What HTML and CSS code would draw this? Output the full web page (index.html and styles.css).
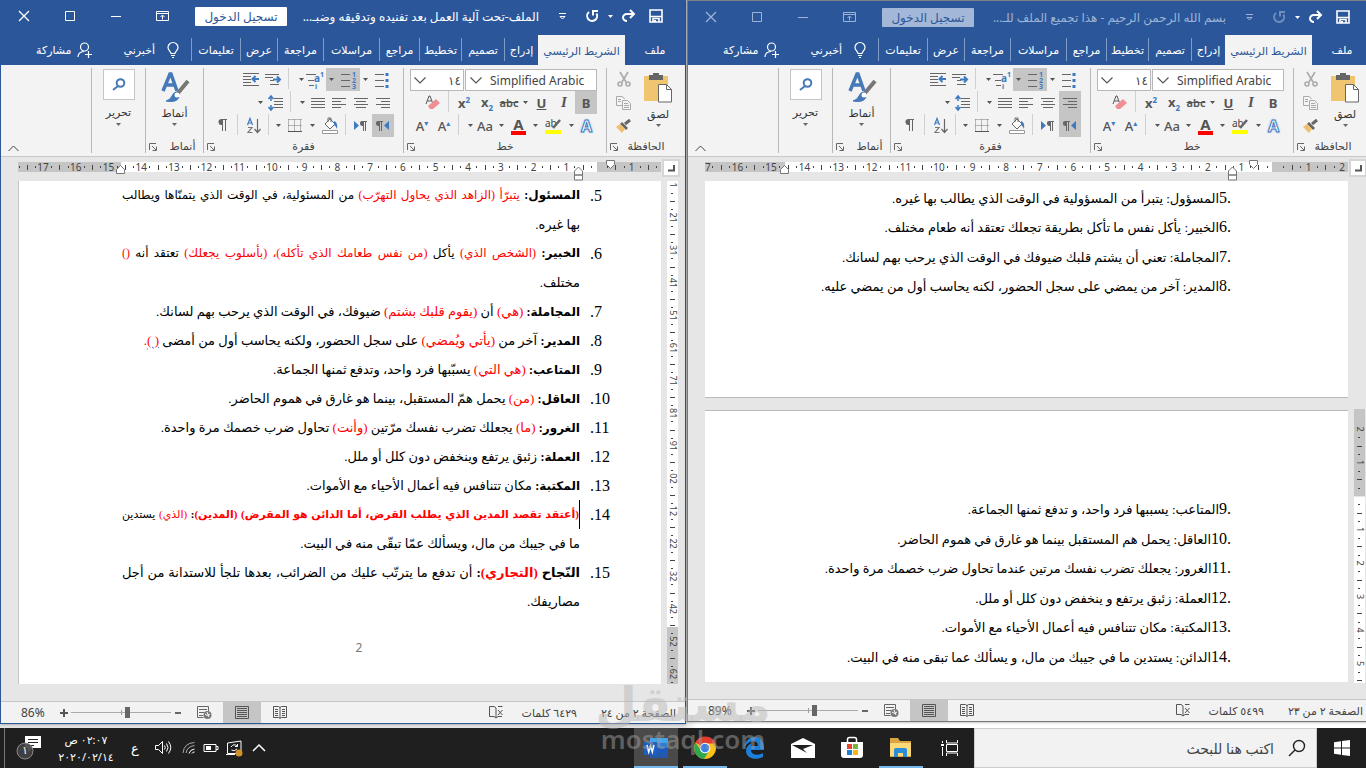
FILE: index.html
```html
<!DOCTYPE html>
<html lang="ar">
<head>
<meta charset="utf-8">
<title>الملف</title>
<link rel="stylesheet" href="styles.css">
</head>
<body>
<main class="desktop">
  <section class="window window-main" data-title="الملف-تحت آلية العمل بعد تفنيده وتدقيقه وضبـ..." data-zoom="86%" data-page="الصفحة ٢ من ٢٤" data-words="٦٤٢٩ كلمات" data-pressed="bold">
    <div class="workspace">
      <div class="hruler" data-width="643" data-zero="581" data-pitch="32.7" data-from="103" data-to="579" data-first="551" data-indent="592" data-end="102"></div>
      <button class="corner" aria-label="علامة جدولة"><svg width="8" height="8"><path d="M1 6.500h6V1" fill="none" stroke="#555" stroke-width="2"/></svg></button>
      <div class="pages">
        <article class="page page-tall" dir="rtl">
          <ol class="items">
            <li><span class="num">5.</span><div><p class="full"><b>المسئول:</b> <i>يتبرّأ (الزاهد الذي يحاول التهرّب)</i> من المسئولية، في الوقت الذي يتمنّاها ويطالب</p><p>بها غيره.</p></div></li>
            <li><span class="num">6.</span><div><p class="full"><b>الخبير:</b> <i>(الشخص الذي)</i> يأكل <i>(من نفس طعامك الذي تأكله)، (بأسلوب يجعلك)</i> تعتقد أنه <i>()</i></p><p>مختلف.</p></div></li>
            <li><span class="num">7.</span><div><p><b>المجاملة:</b> <i>(هي)</i> أن <i>(يقوم قلبك بشتم)</i> ضيوفك، في الوقت الذي يرحب بهم لسانك.</p></div></li>
            <li><span class="num">8.</span><div><p><b>المدير:</b> آخر من <i>(يأتي ويُمضي)</i> على سجل الحضور، ولكنه يحاسب أول من أمضى <i><u>( )</u>.</i></p></div></li>
            <li><span class="num">9.</span><div><p><b>المتاعب:</b> <i>(هي التي)</i> يسبّبها فرد واحد، وتدفع ثمنها الجماعة.</p></div></li>
            <li><span class="num">10.</span><div><p><b>العاقل:</b> <i>(من)</i> يحمل همّ المستقبل، بينما هو غارق في هموم الحاضر.</p></div></li>
            <li><span class="num">11.</span><div><p><b>الغرور:</b> <i>(ما)</i> يجعلك تضرب نفسك مرّتين <i>(وأنت)</i> تحاول ضرب خصمك مرة واحدة.</p></div></li>
            <li><span class="num">12.</span><div><p><b>العملة:</b> زئبق يرتفع وينخفض دون كلل أو ملل.</p></div></li>
            <li><span class="num">13.</span><div><p><b>المكتبة:</b> مكان تتنافس فيه أعمال الأحياء مع الأموات.</p></div></li>
            <li><span class="num">14.</span><div><p class="full tight"><b><i>(أعتقد تقصد المدين الذي يطلب القرض، أما الدائن هو المقرض) (المدين)</i>:</b> <i>(الذي)</i> يستدين</p><p>ما في جيبك من مال، ويسألك عمّا تبقّى منه في البيت.</p></div></li>
            <li><span class="num">15.</span><div><p class="full roomy"><b>النّجاح <i>(التجاري)</i>:</b> أن تدفع ما يترتّب عليك من الضرائب، بعدها تلجأ للاستدانة من أجل</p><p>مصاريفك.</p></div></li>
          </ol>
          <footer class="folio">2</footer>
        </article>
      </div>
      <div class="vruler" data-kind="main"></div>
    </div>
  </section>

  <section class="window window-side" data-title="بسم الله الرحمن الرحيم - هذا تجميع الملف للـ..." data-zoom="89%" data-page="الصفحة ٢ من ٢٣" data-words="٥٤٩٩ كلمات" data-pressed="right">
    <div class="workspace">
      <div class="hruler" data-width="643" data-zero="570" data-pitch="33.6" data-from="80" data-to="567" data-first="518" data-indent="548" data-end="79"></div>
      <button class="corner" aria-label="علامة جدولة"><svg width="8" height="8"><path d="M1 6.500h6V1" fill="none" stroke="#555" stroke-width="2"/></svg></button>
      <div class="pages">
        <article class="page page-top" dir="rtl">
          <p><span>.5</span>المسؤول: يتبرأ من المسؤولية في الوقت الذي يطالب بها غيره.</p>
          <p><span>.6</span>الخبير: يأكل نفس ما تأكل بطريقة تجعلك تعتقد أنه طعام مختلف.</p>
          <p><span>.7</span>المجاملة: تعني أن يشتم قلبك ضيوفك في الوقت الذي يرحب بهم لسانك.</p>
          <p><span>.8</span>المدير: آخر من يمضي على سجل الحضور، لكنه يحاسب أول من يمضي عليه.</p>
        </article>
        <article class="page page-bottom" dir="rtl">
          <p><span>.9</span>المتاعب: يسببها فرد واحد، و تدفع ثمنها الجماعة.</p>
          <p><span>.10</span>العاقل: يحمل هم المستقبل بينما هو غارق في هموم الحاضر.</p>
          <p><span>.11</span>الغرور: يجعلك تضرب نفسك مرتين عندما تحاول ضرب خصمك مرة واحدة.</p>
          <p><span>.12</span>العملة: زئبق يرتفع و ينخفض دون كلل أو ملل.</p>
          <p><span>.13</span>المكتبة: مكان تتنافس فيه أعمال الأحياء مع الأموات.</p>
          <p><span>.14</span>الدائن: يستدين ما في جيبك من مال، و يسألك عما تبقى منه في البيت.</p>
        </article>
      </div>
      <div class="vruler" data-kind="side"></div>
    </div>
  </section>
</main>

<footer class="taskbar">
  <div class="tray">
    <button class="notify" aria-label="الإشعارات"><svg width="28" height="30"><path d="M9 3h16v12h-9l-4 4v-4H9z" fill="#fff"/><path d="M12 6.500h10M12 9.500h10M12 12.500h6" stroke="#222"/><circle cx="9" cy="18" r="8" fill="#444" fill-opacity=".9" stroke="#8a8a8a"/></svg><span>١</span></button>
    <time class="clock" dir="rtl">٠٢:٠٧ ص<br>٢٠٢٠/٠٢/١٤</time>
    <button class="lang">ع</button>
    <button class="t1" aria-label="الصوت"><svg width="18" height="16" fill="none" stroke="#fff"><path d="M1.500 5.500h3l4-4v12l-4-4h-3zM10.500 5.500q1.500 2 0 4M12.500 3.500q3 4 0 8M14.500 1.500q4.500 6 0 12"/></svg></button>
    <button class="t2" aria-label="الشبكة"><svg width="14" height="14" fill="none" stroke="#aaa"><path d="M1 12Q2 2 12.500 1.500M4 12Q5 5.500 12.500 4.500" /><path stroke="#fff" d="M7 12.500q1-4 5.500-4.500M10 12.500q.5-1.500 2.500-1.500"/></svg></button>
    <button class="t3" aria-label="البطارية"><svg width="16" height="10"><path d="M1 1.500h12v7H1zM13 3.500h2v3h-2" fill="none" stroke="#fff"/><path d="M3 3h5v4H3z" fill="#fff"/></svg></button>
    <button class="t4" aria-label="التحديث"><svg width="18" height="17"><path d="M1.500 3L15 1v12.500H1.500zM0 14.500h9" fill="none" stroke="#fff"/><path d="M5 7q3-4 6-1m.5-2v2.500H9M11 9q-3 3-5.500 1" fill="none" stroke="#fff"/><circle cx="13" cy="13" r="3.500" fill="#d0942a"/></svg></button>
    <button class="t5" aria-label="إظهار المزيد"><svg width="14" height="8"><path d="M1 7l6-6 6 6" fill="none" stroke="#fff" stroke-width="1.500"/></svg></button>
  </div>
  <nav class="apps">
    <button class="open current" aria-label="Word"><svg width="26" height="24"><path d="M7 2h18v6H7z" fill="#41a5ee"/><path d="M7 7h18v5H7z" fill="#2b7cd3"/><path d="M7 12h18v5H7z" fill="#185abd"/><path d="M7 17h18v5H7z" fill="#2458a8"/><path d="M1 6h13v13H1z" fill="#1f5fbf"/><path d="M4 9l1.700 7L7.500 10l1.800 6L11 9" fill="none" stroke="#fff" stroke-width="1.500"/></svg></button>
    <button class="open" aria-label="Chrome"><svg width="24" height="24" viewBox="0 0 24 24"><circle cx="12" cy="12" r="11" fill="#fbc116"/><path d="M12 12L2.500 6.500A11 11 0 0 1 22.500 7.500H12z" fill="#e33b2e"/><path d="M12 12L7.500 14 2.500 6.500A11 11 0 0 0 11 23l5-8z" fill="#2da94f"/><circle cx="12" cy="12" r="5.300" fill="#fff"/><circle cx="12" cy="12" r="4.200" fill="#3b82e8"/></svg></button>
    <button aria-label="Edge"><svg width="22" height="24"><path d="M1 12C2 4 7 1 12 1c6 0 9 5 9 10v3H8c0 5 7 6 12 3v4C12 25 3 22 3 15c0-4 3-7 6-8-1 1-1 2-1 3h7c0-7-10-6-14 2z" fill="#1b7fdb"/></svg></button>
    <button aria-label="البريد"><svg width="24" height="22"><path d="M0 7l12-6 12 6v14H0z" fill="#fff"/><path d="M1 8h21l-10 4 4 4z" fill="#1f1f1f"/></svg></button>
    <button aria-label="المتجر"><svg width="24" height="24"><path d="M1 6h22v13q0 3-3 3H4q-3 0-3-3z" fill="#fff"/><path d="M7.500 6V3.500q0-2 2-2h5q2 0 2 2V6" fill="none" stroke="#fff" stroke-width="1.500"/><path d="M7 8h5v5H7z" fill="#e8452c"/><path d="M13 8h5v5h-5z" fill="#7bb53a"/><path d="M7 14h5v5H7z" fill="#1b82d0"/><path d="M13 14h5v5h-5z" fill="#f5b813"/></svg></button>
    <button class="open" aria-label="مستكشف الملفات"><svg width="24" height="22"><path d="M1 1h8l2 3h11v16H1z" fill="#d9a441"/><path d="M1 6h21v13H1z" fill="#fbd978"/><path d="M5 20v-7q0-2 2-2h9q2 0 2 2v7h-4v-4H9v4z" fill="#2a8dd8"/></svg></button>
    <button aria-label="عرض المهام"><svg width="18" height="18" fill="none" stroke="#fff"><path d="M5.500 1v3h11V1M5.500 5.500h11v7h-11zM5.500 17v-3h11v3M1.500 2v2M1.500 8v9"/><path d="M0 6h3" stroke-width="2"/></svg></button>
  </nav>
  <label class="search" dir="rtl"><svg width="18" height="18"><circle cx="11" cy="7" r="5.500" fill="none" stroke="#222" stroke-width="1.400"/><path d="M7 11l-6 6" stroke="#222" stroke-width="1.400"/></svg><input type="text" placeholder="اكتب هنا للبحث" aria-label="بحث"></label>
  <button class="start" aria-label="ابدأ"><svg width="16" height="16" fill="#fff"><path d="M0 2.200l7-1v6.300H0zM8 1l8-1v7.500H8zM0 8.500h7v6.300l-7-1zM8 8.500h8V16l-8-1z"/></svg></button>
</footer>
<div class="watermark" dir="rtl"><strong>مستقل</strong><span>mostaql.com</span></div>
<script src="app.js"></script>
</body>
</html>
```
FILE: styles.css
```css
* { box-sizing: border-box; }
body { margin: 0; height: 100vh; display: flex; flex-direction: column; overflow: hidden; background: #fff; font-family: "Noto Sans", "DejaVu Sans", sans-serif; font-size: 11px; color: #333; position: relative; }
button { background: none; border: 0; padding: 0; margin: 0; font: inherit; color: inherit; display: flex; flex: none; align-items: center; justify-content: center; white-space: nowrap; }
svg { display: block; flex: none; overflow: visible; }
p { margin: 0; }

.desktop { flex: 1; min-height: 0; display: flex; gap: 1px; overflow: hidden; background: linear-gradient(90deg, #e4e4e4 50%, #fff 51%); }
.window { flex: 0 0 calc(50% + 3px); min-width: 0; display: flex; flex-direction: column; background: #e6e6e6; border: 1px solid #2b579a; border-top: 0; margin-bottom: 4px; box-shadow: 0 0 3px #0006; }
.window-side { border-color: #777; margin-bottom: 6px; }

.titlebar { height: 35px; background: #2b579a; color: #fff; display: flex; align-items: flex-start; }
.window-side .titlebar { border-top: 1px solid #7a7f88; }
.titlebar button { height: 32px; }
.wincontrols { display: flex; }
.wincontrols button { width: 46px; }
.titlebar .signin { width: 92px; height: 19px; margin: 7px 0 0 10px; background: #fff; color: #2b579a; border-radius: 1px; font-size: 12px; }
.titlebar h1 { flex: 1; min-width: 0; margin: 0; font-size: 12px; font-weight: 400; line-height: 34px; overflow: hidden; white-space: nowrap; text-align: right; }
.quick { display: flex; padding-right: 22px; }
.quick .menu { width: 46px; }
.quick .undo { width: 14px; }
.quick .small { width: 22px; }
.quick .redo { width: 15px; }
.quick .save { width: 14px; margin-left: 13px; }
.window-side .wincontrols, .window-side h1, .window-side .menu, .window-side .undo { color: #9db4d6; }
.window-side .undo { opacity: .6; }
.window-side .titlebar .signin { background: #a3b8d8; }

.tabs { height: 30px; background: #2b579a; color: #fff; display: flex; direction: rtl; }
.tabs button { height: 23px; margin-top: 3px; border-left: 1px solid #7f9cc8; }
.tabs button.file { border: 0; }
.tabs button.active { height: 30px; margin: 0; border: 0; background: #f3f3f3; color: #2b579a; }
.tabs button.plain { border: 0; gap: 12px; }
.tabs button.share { gap: 5px; margin-right: 32px; }
.tabs button.tell { margin-right: 12px; }

.ribbon { height: 92px; background: #f3f3f3; border-bottom: 1px solid #c8c8c8; display: flex; flex-direction: row-reverse; padding-top: 3px; }
.group { flex: none; border-left: 1px solid #b8b8b8; height: 85px; display: flex; flex-direction: column; justify-content: space-between; }
.g-clip { width: 79px; }
.g-font { width: 203px; }
.g-para { width: 200px; }
.g-style { width: 58px; }
.g-edit { width: 54px; }
.row { display: flex; height: 23px; }
.row button { height: 23px; color: #555; }
.row .pressed { background: #c5c5c5; }
.row .duo { display: flex; }
.sep { width: 1px; background: #cfcfcf; height: 21px; }
.group-name { display: flex; height: 16px; align-items: center; justify-content: center; position: relative; color: #444; }
.group-name button { position: absolute; left: 3px; top: 6px; }
.g-style .group-name { padding-left: 16px; }
.clip-body { display: flex; }
.clip-tools { width: 34px; }
.clip-tools button { width: 34px; height: 23px; }
.big { flex-direction: column; gap: 3px; justify-content: flex-start; height: 69px; padding-top: 5px; }
.big > svg:last-child { color: #666; }
.clip-body .big { width: 34px; }
.g-edit .big { padding-top: 1px; gap: 4px; }
.lens { width: 32px; height: 31px; background: #fff; border: 1px solid #c6c6c6; display: flex; align-items: center; justify-content: center; }
.collapse { flex: 1; align-items: flex-end; justify-content: flex-start; padding: 0 0 4px 7px; }
.combo { display: flex; align-items: center; background: #fff; border: 1px solid #b8b8b8; height: 22px; margin-top: 1px; padding-left: 3px; }
.combo select { flex: 1; min-width: 0; appearance: none; border: 0; background: none; padding: 0; margin: 0; font: inherit; font-size: 12px; color: #444; }
.combo.size { width: 54px; margin-right: 1px; padding-right: 2px; }
.combo.size select { direction: rtl; }
.combo.face { width: 132px; padding-left: 4px; }
.combo.face select { padding-left: 8px; }
.glyph { font-size: 13px; font-weight: 700; }
.strike { font-size: 11px; text-decoration: line-through; font-weight: 600; }
.under { text-decoration: underline; }
.ital { font-family: "Liberation Serif", serif; font-style: italic; font-size: 15px; }
.medium { font-weight: 500; }
.glyph sup, .glyph sub { font-size: 8px; color: #3e7ac0; line-height: 1; }
.bar { border-bottom: 4px solid #f00; line-height: 14px; padding: 0 2px; font-size: 15px; }
.glow { color: #fff; font-size: 16px; -webkit-text-stroke: 1px #3e7ac0; text-shadow: 0 0 3px #7fb1e6; }

.workspace { flex: 1; min-height: 0; display: grid; grid-template-columns: minmax(0, 1fr) 24px; grid-template-rows: 24px minmax(0, 1fr); }
.hruler { justify-self: end; }
.corner { width: 18px; height: 18px; margin: 2px 0 0 1px; border: 2px solid #d6d6d6; background: #fff; justify-self: start; }
.pages { min-height: 0; overflow: hidden; padding-left: 17px; }
.vruler { overflow: hidden; padding-left: 6px; }
.page { background: #fff; font-family: "Liberation Serif", "DejaVu Sans", serif; font-size: 13px; color: #000; }
.page-tall { height: 503px; border-left: 1px solid #c6c6c6; padding: 0 49px 0 103px; display: flex; flex-direction: column; }
.items { list-style: none; margin: 0; padding: 0; line-height: 29px; white-space: nowrap; }
.items li { display: flex; }
.items li > div { flex: 1; min-width: 0; }
.items p { height: 29px; }
.items b { font-size: 12px; line-height: 1; }
.num { width: 32px; padding-left: 10px; direction: rtl; display: flex; justify-content: flex-end; font-size: 16px; }
.items i { font-style: normal; color: #f00; }
.items u { text-decoration: underline wavy #2b6fd0 1px; }
.items .full { text-align-last: justify; font-size: 12px; }
.items .tight, .items .tight b { font-size: 11px; }
.items .roomy, .items .roomy b { font-size: 13px; }
.tight { border-right: 1px solid #000; }
.folio { text-align: center; direction: ltr; padding: 23px 0 0; margin-right: -32px; margin-left: -48px; color: #777; font-family: "Noto Sans", sans-serif; font-size: 12px; }
.page-top, .page-bottom { display: flex; flex-direction: column; justify-content: space-between; line-height: 30px; white-space: nowrap; padding-right: 117px; }
.page-top span, .page-bottom span { font-size: 16px; line-height: 1; }
.page-top { height: 217px; padding-top: 3px; padding-bottom: 96px; border-bottom: 1px solid #bbb; }
.page-bottom { height: 272px; margin-top: 12px; padding-top: 84px; padding-bottom: 10px; border-top: 1px solid #bbb; }
.page-top p, .page-bottom p { height: 29px; }

.status { height: 22px; border-top: 1px solid #c6c6c6; background: #f2f2f2; display: flex; align-items: center; color: #444; direction: ltr; }
.status .pct { width: 56px; padding-left: 20px; font-size: 12px; }
.status .step { width: 14px; }
.status input { width: 100px; height: 12px; margin: 0; appearance: none; background: linear-gradient(#aaa, #aaa) 0 50% / 100% 1px no-repeat, linear-gradient(#999, #999) 50% 50% / 1px 5px no-repeat; }
.status input::-webkit-slider-thumb { appearance: none; width: 5px; height: 11px; background: #666; }
.status .view { width: 38px; height: 21px; }
.status .view.on { background: #c5c5c5; }
.status .views { display: flex; }
.status .grow { flex: 1; }
.status .proof { width: 36px; }
.status .words { width: 73px; padding-right: 10px; white-space: nowrap; }
.status .where { width: 98px; padding-right: 9px; white-space: nowrap; }

.taskbar { height: 40px; background: #1f1f1f; color: #fff; display: flex; }
.tray { flex: 1; display: flex; align-items: center; border-left: 1px solid #777; margin-left: 4px; }
.notify { margin-left: 11px; position: relative; }
.notify span { position: absolute; left: 6px; top: 9px; font-size: 11px; }
.clock { width: 84px; text-align: center; line-height: 17px; font-size: 11px; }
.lang { width: 14px; font-size: 13px; }
.t1 { margin-left: 12px; }
.t2 { margin-left: 10px; }
.t3 { margin-left: 7px; }
.t4 { margin-left: 7px; }
.t5 { margin-left: 8px; }
.apps { display: flex; gap: 5px; padding-right: 2px; }
.apps button { width: 44px; height: 40px; border-bottom: 2px solid transparent; padding-top: 2px; }
.apps .open { border-color: #76b9ed; }
.apps .current { background: #4a4a4a; }
.search { width: calc(25% + 2px); background: #f2f2f2; border: 1px solid #ccc; display: flex; align-items: center; padding: 0 10px; gap: 12px; }
.search input { flex: 1; min-width: 0; border: 0; background: none; font: inherit; font-size: 14px; }
.search input::placeholder { color: #444; opacity: 1; }
.start { width: 49px; }

.watermark { position: absolute; left: 600px; bottom: 16px; width: 166px; color: #9998; display: flex; flex-direction: column; align-items: center; pointer-events: none; }
.watermark strong { font-size: 48px; line-height: 46px; color: #bbb8; }
.watermark span { font-size: 26px; line-height: 26px; font-weight: 600; direction: ltr; }
```
FILE: app.js
```js
const svg = (w, h, body) => `<svg width="${w}" height="${h}" fill="none" stroke="currentColor">${body}</svg>`;
const blue = '#3e7ac0';
const lines = (list) => svg(14, 12, `<path stroke="#666" d="${list.map(([x, w], i) => `M${x} ${i * 3 + 1.5}h${w}`).join('')}"/>`);
const icon = {
  close: svg(10, 10, '<path d="M0 0l10 10M10 0L0 10" stroke-width="1.300"/>'),
  max: svg(10, 10, '<path d="M.5.5h9v9h-9z"/>'),
  min: svg(10, 10, '<path d="M0 5.500h10"/>'),
  display: svg(13, 10, '<path d="M.5.5h12v9H.5zM1 2.500h11M6.500 8.500v-4M4.500 6l2-2 2 2"/>'),
  menu: svg(9, 8, '<path d="M1 1.500h7M2 4.500h5L4.500 7z"/>'),
  undo: svg(14, 14, '<path d="M4 3a5 5 0 1 0 7.500 1.500M8 6.500V2h5" stroke-width="2"/>'),
  redo: svg(15, 14, '<path d="M13 5H6a4 3.500 0 0 0 0 7M9 1l4 4-4 4" stroke-width="2"/>'),
  save: svg(14, 14, '<path d="M1 1h12v12H1zM1 7.500h12" stroke-width="1.600"/><path d="M4 13v-3.500h6V13" stroke-width="1.600"/><path d="M5 11h2v2H5z" fill="currentColor" stroke="none"/>'),
  caret: svg(5, 3, '<path d="M0 0h5L2.500 3z" fill="currentColor" stroke="none"/>'),
  bulb: svg(12, 16, '<path d="M4 11.500c0-2-3-3-3-6a5 5 0 0 1 10 0c0 3-3 4-3 6zM4 13.500h4M5 15.500h2" stroke-width="1.200"/>'),
  person: svg(15, 16, '<circle cx="7.500" cy="5" r="4" stroke-width="1.200"/><path d="M1 15q0-5 6-5.500M11.500 9v7M8 12.500h7" stroke-width="1.200"/>'),
  chevron: svg(12, 7, '<path d="M.5.5L6 6 11.500.5" stroke="#555" stroke-width="1.200"/>'),
  up: svg(11, 7, '<path d="M.5 6L5.500 1l5 5" stroke="#444"/>'),
  launch: svg(8, 8, '<path d="M.5 7V.5H7M3 3l4 4M7.500 3.500v4h-4" stroke="#666"/>'),
  cut: svg(14, 15, '<g stroke="#aaa" stroke-width="1.600"><path d="M3 0l6 10M11 0L5 10"/><circle cx="3" cy="12" r="2"/><circle cx="11" cy="12" r="2"/></g>'),
  copy: svg(16, 14, '<g stroke="#aaa"><path d="M8.500 3V2.500L6 .5H.5v9H6M6.500 4.500h5l3 3v6h-8zM2 3.500h3M2 5.500h3M8 7.500h4M8 9.500h5M8 11.500h5"/></g>'),
  brush: svg(16, 14, '<path d="M9 5l5-4" stroke="#666" stroke-width="3"/><path d="M6 3l6 6-2 2-6-6z" fill="#666" stroke="none"/><path d="M4 5l5 5-3 4-6-6z" fill="#efc070" stroke="none"/>'),
  paste: svg(29, 30, '<path d="M0 3h24v25H0z" fill="#efc56f" stroke="none"/><path d="M5 2h4V0h6v2h4v5H5z" fill="#666" stroke="none"/><path d="M14.500 11.500h8l5 5v12.500h-13z" fill="#fff" stroke="#666"/><path d="M22.500 11.500v5h5" stroke="#666"/>'),
  styles: svg(28, 29, '<path d="M2 18L9 1h1l6 17M5 12h9" stroke="#4679b8" stroke-width="3.500"/><path d="M27 8L17 20" stroke="#777" stroke-width="4"/><path d="M17 19q-5 0-6 4-2 4-6 5 11 2 13-4" fill="#4679b8" stroke="#4679b8"/><circle cx="16" cy="22" r="2.500" fill="#fff" stroke="none"/>'),
  lens: svg(14, 13, '<g stroke="#4679b8" stroke-width="2"><circle cx="8.500" cy="5" r="3.800"/><path d="M6 8l-5 4"/></g>'),
  dec: svg(16, 13, `<path stroke="#666" d="M0 .5h16M0 3.500h8M0 6.500h8M0 9.500h8M0 12.500h16"/><path stroke="${blue}" stroke-width="2" d="M16 6h-6M12.500 3L9.500 6l3 3"/>`),
  inc: svg(16, 11, `<path stroke="#666" d="M0 .5h14M0 3.500h8M5 6.500h4M5 10.500h9"/><path stroke="${blue}" stroke-width="2" d="M8 5.500h6M12 2.500l3 3-3 3"/>`),
  multi: svg(18, 17, `<path stroke="#666" d="M0 3.500h10M2 9.500h6M3 14.500h5"/><text x="8" y="11" font-size="10" font-weight="700" fill="${blue}" stroke="none">a</text><text x="14" y="6" font-size="7" font-weight="700" fill="${blue}" stroke="none">1</text><text x="9" y="18" font-size="7" font-weight="700" fill="${blue}" stroke="none">i</text>`),
  numbers: svg(15, 18, `<path stroke="#666" d="M0 3.500h9M0 9.500h9M0 15.500h9"/><g font-size="7" font-weight="700" fill="${blue}" stroke="none"><text x="11" y="6">1</text><text x="11" y="12">2</text><text x="11" y="18">3</text></g>`),
  bullets: svg(14, 16, `<path stroke="#666" d="M0 2.500h9M0 8.500h9M0 14.500h9"/><path stroke="${blue}" stroke-width="3" d="M10.500 2.500h3M10.500 8.500h3M10.500 14.500h3"/>`),
  spacing: svg(15, 16, `<path stroke="#666" d="M6 3.500h9M6 6.500h9M6 9.500h9M6 12.500h9"/><path stroke="${blue}" stroke-width="1.500" d="M3 1v5M.5 4L3 1l2.500 3M3 15v-5M.5 12L3 15l2.500-3"/>`),
  justify: lines([[0, 14], [0, 14], [0, 14], [0, 14]]),
  left: lines([[0, 14], [0, 9], [0, 14], [0, 9]]),
  center: lines([[0, 14], [2, 10], [0, 14], [2, 10]]),
  right: lines([[0, 14], [5, 9], [0, 14], [5, 9]]),
  pilcrow: svg(12, 13, '<path fill="#666" stroke="none" d="M5 0h6v1h-1v11H9V1H7v11H6V6a3 3 0 0 1-1-6z"/>'),
  ltr: svg(14, 12, `<path d="M0 1v9l5-4.500z" fill="${blue}" stroke="none"/><path fill="#666" stroke="none" d="M8 1h5v1h-1v9h-1V2h-1v9H9V6a2.500 2.500 0 0 1-1-5z"/>`),
  rtl: svg(14, 12, `<path d="M13 1v9L8 5.500z" fill="${blue}" stroke="none"/><path fill="#666" stroke="none" d="M2 1h5v1H6v9H5V2H4v9H3V6a2.500 2.500 0 0 1-1-5z"/>`),
  sort: svg(14, 16, `<g stroke-width="1.200"><path stroke="${blue}" d="M.5 7L3 .5 5.500 7M1.500 5h3"/><path stroke="#777" d="M1 9.500h4l-4 5h4.500"/><path stroke="#666" d="M10.500 1v13M7.500 11l3 3.500 3-3.500"/></g>`),
  borders: svg(14, 14, '<path stroke="#777" stroke-dasharray="1 1" d="M.5.5h13M.5.5v12M6.500.5v12M12.500.5v12M.5 6.500h13"/><path stroke="#555" d="M0 12.500h14"/>'),
  fill: svg(17, 17, `<path d="M3 7l5-5 5 5-5 5zM6 5V1h3v4" fill="#fff" stroke="#666"/><path d="M12 4q4 1 3 8-1-3-3-4" fill="${blue}" stroke="none"/><path d="M.5 13.500h15v3H.5z" fill="#fff" stroke="#999"/>`),
  erase: svg(16, 15, '<path d="M1 9L4 1h1l3 8M2.500 6h4" stroke="#555"/><path d="M3 11l8-7 4 4-7 6H5z" fill="#ef8f94" stroke="none"/>'),
  high: svg(17, 16, '<text x="0" y="9" font-size="10" fill="#444" stroke="none">ab</text><path d="M15 2L8 10" stroke="#666" stroke-width="2.500"/><path d="M0 12h16v4H0z" fill="#ff0" stroke="none"/>'),
  web: svg(15, 14, '<path stroke="#666" d="M11.500 5V.5H.5v11h6M2 3.500h8M2 6.500h5M2 9.500h4"/><circle cx="10.500" cy="9" r="4" fill="#777" stroke="none"/><path stroke="#fff" d="M8 8q2 3 5 0M10 6l2 5"/>'),
  print: svg(14, 13, '<path stroke="#555" d="M.5.5h13v12H.5zM2 2.500h10M2 4.500h10M2 6.500h10M2 8.500h10M2 10.500h10"/>'),
  read: svg(14, 13, '<path stroke="#555" d="M.5.5h5l1.500 1 1.500-1h5v11h-5l-1.500 1-1.500-1h-5zM7 1v11M2 3.500h3M2 5.500h3M2 7.500h3M2 9.500h3M9 3.500h3M9 5.500h3M9 7.500h3M9 9.500h3"/>'),
  proof: svg(15, 13, '<path stroke="#555" d="M7 12l-2-1.500H.5V.5H5l2 1.500v10l2-1.500h4M9 .5h4.500M9 4l4.500 5M13.500 4L9 9"/>'),
  plus: svg(8, 8, '<path stroke="#555" stroke-width="2" d="M0 4h8M4 0v8"/>'),
  minus: svg(8, 8, '<path stroke="#666" stroke-width="2" d="M1 4h6"/>')
};

const gap = (w) => `<span style="width:${w}px"></span>`;
const sep = (before, after) => `${gap(before)}<span class="sep"></span>${gap(after)}`;
const btn = (w, body, name, cls = '') => `<button class="${cls}" style="width:${w}px" aria-label="${name}">${body}</button>`;
const drop = (w = 10) => btn(w, icon.caret, 'المزيد');
const label = (text) => `<div class="group-name"><button aria-label="خيارات">${icon.launch}</button><span>${text}</span></div>`;

const tabs = [['إدراج', 34], ['تصميم', 43], ['تخطيط', 42], ['مراجع', 40], ['مراسلات', 56], ['مراجعة', 46], ['عرض', 37], ['تعليمات', 49]];

function chrome(win) {
  const on = (key) => (win.pressed === key ? 'pressed' : '');
  return `
  <header class="titlebar">
    <div class="wincontrols">${['close', 'max', 'min', 'display'].map((k) => `<button aria-label="${k}">${icon[k]}</button>`).join('')}</div>
    <button class="signin">تسجيل الدخول</button>
    <h1 dir="rtl">${win.title}</h1>
    <div class="quick"><button class="menu" aria-label="تخصيص">${icon.menu}</button><button class="undo" aria-label="تراجع">${icon.undo}</button><button class="small" aria-label="المزيد">${icon.caret}</button><button class="redo" aria-label="إعادة">${icon.redo}</button><button class="save" aria-label="حفظ">${icon.save}</button></div>
  </header>
  <nav class="tabs">
    <button class="file" style="width:60px">ملف</button><button class="active" style="width:87px">الشريط الرئيسي</button>
    ${tabs.map(([t, w]) => `<button style="width:${w}px">${t}</button>`).join('')}
    <button class="plain tell">${icon.bulb}<span>أخبرني</span></button>
    <button class="plain share">${icon.person}<span>مشاركة</span></button>
  </nav>
  <div class="ribbon">
    <div class="group g-clip"><div class="clip-body"><div class="clip-tools"><button aria-label="قص">${icon.cut}</button><button aria-label="نسخ">${icon.copy}</button><button aria-label="نسخ التنسيق">${icon.brush}</button></div><button class="big">${icon.paste}<span>لصق</span>${icon.caret}</button></div>${label('الحافظة')}</div>
    <div class="group g-font"><div>
      <div class="row">${gap(6)}<label class="combo size">${icon.chevron}<select aria-label="حجم الخط"><option>١٤</option></select></label><label class="combo face">${icon.chevron}<select aria-label="الخط"><option>Simplified Arabic</option></select></label></div>
      <div class="row">${gap(18)}${btn(22, icon.erase, 'مسح')}${sep(4, 3)}${btn(24, '<span class="glyph">x<sup>2</sup></span>', 'مرتفع')}${btn(22, '<span class="glyph">x<sub>2</sub></span>', 'منخفض')}${btn(22, '<span class="strike">abc</span>', 'يتوسطه خط')}${drop()}${btn(23, '<span class="glyph under">U</span>', 'تسطير')}${btn(22, '<span class="glyph ital">I</span>', 'مائل')}${btn(22, '<span class="glyph">B</span>', 'غامق', on('bold'))}</div>
      <div class="row">${gap(7)}${btn(22, '<span class="glyph medium">A<sup>▾</sup></span>', 'تصغير')}${btn(22, '<span class="glyph medium">A<sup>▴</sup></span>', 'تكبير')}${sep(3, 6)}${drop()}${btn(20, '<span class="glyph medium">Aa</span>', 'حالة الأحرف')}${drop(12)}${btn(23, '<span class="glyph bar">A</span>', 'لون الخط')}${drop()}${btn(26, icon.high, 'تمييز')}${drop()}${btn(21, '<span class="glyph glow">A</span>', 'تأثيرات')}</div></div>${label('خط')}</div>
    <div class="group g-para"><div>
      <div class="row">${gap(37)}${btn(20, icon.dec, 'إنقاص')}${btn(24, icon.inc, 'زيادة')}${sep(3, 7)}${drop()}${btn(18, icon.multi, 'متعدد')}${gap(2)}<span class="duo pressed">${drop()}${btn(24, icon.numbers, 'ترقيم')}</span>${drop()}${btn(24, icon.bullets, 'تعداد')}</div>
      <div class="row">${gap(51)}${drop()}${btn(20, icon.spacing, 'تباعد')}${sep(5, 6)}${drop()}${btn(21, icon.justify, 'ضبط')}${btn(22, icon.left, 'يسار')}${btn(22, icon.center, 'وسط')}${btn(22, icon.right, 'يمين', on('right'))}</div>
      <div class="row">${gap(7)}${btn(22, icon.pilcrow, 'علامات')}${sep(4, 3)}${btn(26, icon.sort, 'فرز')}${sep(1, 4)}${drop()}${btn(24, icon.borders, 'حدود')}${drop()}${btn(26, icon.fill, 'تظليل')}${sep(2, 3)}${btn(23, icon.ltr, 'يسار إلى يمين')}${btn(22, icon.rtl, 'يمين إلى يسار', 'pressed')}</div></div>${label('فقرة')}</div>
    <div class="group g-style"><button class="big">${icon.styles}<span>أنماط</span>${icon.caret}</button>${label('أنماط')}</div>
    <div class="group g-edit"><button class="big"><span class="lens">${icon.lens}</span><span>تحرير</span>${icon.caret}</button></div>
    <button class="collapse" aria-label="طي">${icon.up}</button>
  </div>`;
}

function status(win) {
  return `<footer class="status">
    <span class="pct">${win.zoom}</span><button class="step" aria-label="تكبير">${icon.plus}</button><input type="range" min="0" max="100" value="57" aria-label="تكبير/تصغير"><button class="step" aria-label="تصغير">${icon.minus}</button>
    <div class="views"><button class="view" aria-label="ويب">${icon.web}</button><button class="view on" aria-label="طباعة">${icon.print}</button><button class="view" aria-label="قراءة">${icon.read}</button></div>
    <span class="grow"></span><button class="proof" aria-label="تدقيق">${icon.proof}</button><span class="words" dir="rtl">${win.words}</span><span class="where" dir="rtl">${win.page}</span></footer>`;
}

function horizontalRuler(el) {
  const d = Object.fromEntries(Object.entries(el.dataset).map(([k, v]) => [k, Number(v)]));
  let out = `<path d="M0 5h${d.width}v10H0z" fill="#c5c5c5"/><path d="M${d.from} 5H${d.to}v10H${d.from}z" fill="#fff"/>`;
  for (let n = -2; n < 18; n += 1) {
    const x = d.zero - n * d.pitch;
    if (n && x > 2 && x < d.width - 2) out += `<text x="${x}" y="14" text-anchor="middle">${Math.abs(n)}</text>`;
    if (x > -4 && x <= 2) out += `<text x="0" y="14">${n % 10}</text>`;
    [[.25, 9, 2], [.5, 8, 5], [.75, 9, 2]].forEach(([f, y, h]) => {
      const t = Math.round(x - f * d.pitch);
      if (t > 0 && t < d.width) out += `<path d="M${t} ${y}h1v${h}h-1z"/>`;
    });
  }
  const marks = `<g fill="#fff" stroke="#777"><path d="M${d.end - 4}.5 16.500v-4l4-4 4 4v4z"/><path d="M${d.first + 5}.5 18v-4l4-4 4 4v4zM${d.first + 5}.5 18h8v5h-8zM${d.indent - 4}.5 3.500h8v4l-4 4-4-4z"/></g>`;
  el.innerHTML = `<svg width="${d.width}" height="24" font-size="10" fill="#444">${out}${marks}</svg>`;
}

function verticalRuler(el) {
  const main = el.dataset.kind === 'main';
  const pitch = main ? 32.6 : 33.5;
  const bands = main ? [[0, 446, '#fff'], [446, 57, '#c5c5c5']] : [[228, 87, '#c5c5c5'], [316, 186, '#fff']];
  let out = bands.map(([y, h, c]) => `<path d="M0 ${y}h11v${h}H0z" fill="${c}"/>`).join('');
  const marks = main ? '1 21 31 41 51 61 71 81 91 02 12 22 32 42 52 62'.split(' ') : ['2', '1', '', '1', '2', '3', '4', '5'];
  marks.forEach((m, i) => {
    const y = (main ? 4 : 248) + i * pitch;
    out += `<text transform="translate(3 ${y}) rotate(90)" text-anchor="middle">${m}</text>`;
    [[.25, 4, 2], [.5, 3, 5], [.75, 4, 2]].forEach(([f, x, w]) => { const t = Math.round(y + f * pitch); if (t < 502) out += `<path d="M${x} ${t}h${w}v1h-${w}z"/>`; });
  });
  el.innerHTML = `<svg width="11" height="503" font-size="9" fill="#444">${out}</svg>`;
}

document.querySelectorAll('.window').forEach((el) => {
  el.insertAdjacentHTML('afterbegin', chrome(el.dataset));
  el.insertAdjacentHTML('beforeend', status(el.dataset));
});
document.querySelectorAll('.hruler').forEach(horizontalRuler);
document.querySelectorAll('.vruler').forEach(verticalRuler);
```
